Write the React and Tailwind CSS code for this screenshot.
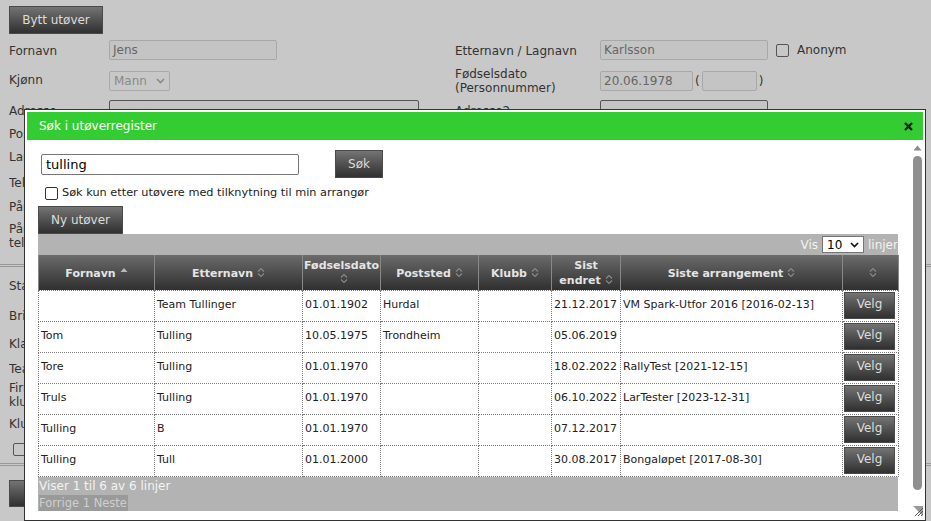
import React from "react";

const rows = [
  ["", "Team Tullinger", "01.01.1902", "Hurdal", "", "21.12.2017", "VM Spark-Utfor 2016 [2016-02-13]"],
  ["Tom", "Tulling", "10.05.1975", "Trondheim", "", "05.06.2019", ""],
  ["Tore", "Tulling", "01.01.1970", "", "", "18.02.2022", "RallyTest [2021-12-15]"],
  ["Truls", "Tulling", "01.01.1970", "", "", "06.10.2022", "LarTester [2023-12-31]"],
  ["Tulling", "B", "01.01.1970", "", "", "07.12.2017", ""],
  ["Tulling", "Tull", "01.01.2000", "", "", "30.08.2017", "Bongaløpet [2017-08-30]"],
];

const colWidths = [116, 148, 78, 98, 73, 69, 222, 56];

const darkBtn =
  "bg-linear-to-b from-[#747474] to-[#303030] border border-[#4a4a4a] text-[#dcdcdc] text-[12px] leading-none flex items-center justify-center";

const SortIcon = ({ active }) =>
  active ? (
    <svg width="8" height="8" viewBox="0 0 8 8" className="relative -top-[4px] ml-[4px] inline-block">
      <path d="M0.5 6 L4 2 L7.5 6Z" fill="#b8b8b8" />
    </svg>
  ) : (
    <svg width="8" height="11" viewBox="0 0 8 11" className="relative -top-[2px] ml-[4px] inline-block">
      <path d="M1 4.5 L4 1.5 L7 4.5 M1 6.5 L4 9.5 L7 6.5" fill="none" stroke="#8a8a8a" strokeWidth="1.1" />
    </svg>
  );

const BgInput = ({ w, value, dark }) => (
  <div
    className={`h-[20px] ${w} rounded-[2px] border ${dark ? "border-[#555]" : "border-[#a8a8a8]"} bg-[#c4c4c4] px-[3px] text-[12px] leading-[18px] text-[#666]`}
  >
    {value}
  </div>
);

const BgCheck = () => <span className="inline-block h-[13px] w-[13px] rounded-[2px] border border-[#555]" />;

// labels that sit behind the dialog: only their first letters show
const Label = ({ h, children }) => (
  <div className={`flex ${h} w-[15px] items-center overflow-hidden whitespace-nowrap leading-[14px]`}>
    <div>{children}</div>
  </div>
);

function Background() {
  return (
    <div className="pl-[9px] pt-[6px]">
      <button className={`${darkBtn} h-[28px] w-[94px] text-[#c8c8c8]`}>Bytt utøver</button>

      <div className="mt-[6px] grid grid-cols-[100px_346px_145px_1fr] gap-y-[6px]">
        <div className="flex h-[20px] items-center pt-[1px]">Fornavn</div>
        <div className="flex items-center">
          <BgInput w="w-[168px]" value="Jens" />
        </div>
        <div className="flex h-[20px] items-center pt-[1px]">Etternavn / Lagnavn</div>
        <div className="flex items-center gap-[8px]">
          <BgInput w="w-[168px]" value="Karlsson" />
          <BgCheck />
          <span>Anonym</span>
        </div>

        <div className="flex h-[28px] items-center">Kjønn</div>
        <div className="flex items-center">
          <div className="flex h-[20px] w-[61px] items-center justify-between rounded-[2px] border border-[#a8a8a8] px-[4px] text-[#8a8a8a]">
            <span>Mann</span>
            <svg width="9" height="6" viewBox="0 0 9 6">
              <path d="M1 1 L4.5 4.5 L8 1" fill="none" stroke="#8a8a8a" strokeWidth="1.6" />
            </svg>
          </div>
        </div>
        <div className="pt-[1px] leading-[14px]">
          Fødselsdato
          <br />
          (Personnummer)
        </div>
        <div className="flex items-center gap-[2px]">
          <BgInput w="w-[93px]" value="20.06.1978" />
          <span>(</span>
          <BgInput w="w-[55px]" value="" />
          <span>)</span>
        </div>
      </div>

      <div className="mt-[5px] grid grid-cols-[100px_346px_145px_1fr]">
        <div className="flex h-[22px] items-center">Adresse</div>
        <div>
          <BgInput w="w-[310px]" value="" dark />
        </div>
        <div className="flex h-[22px] items-center">Adresse2</div>
        <div>
          <BgInput w="w-[168px]" value="" dark />
        </div>
      </div>

      <Label h="h-[24px]">Postnr / Sted</Label>
      <Label h="h-[22px]">Land</Label>
      <Label h="h-[30px]">Telefon</Label>
      <Label h="h-[18px]">Pårørende</Label>
      <Label h="h-[40px]">
        Pårørende
        <br />
        telefon
      </Label>
      <div className="mt-[8px] -ml-[9px] border-t-[3px] border-double border-[#999]" />
      <Label h="h-[38px]">Startnummer</Label>
      <Label h="h-[22px]">Brikke</Label>
      <Label h="h-[34px]">Klasse</Label>
      <Label h="h-[16px]">Team</Label>
      <Label h="h-[36px]">
        Firma /
        <br />
        klubb
      </Label>
      <Label h="h-[22px]">Klubb</Label>
      <div className="flex h-[28px] items-center pl-[4px]">
        <BgCheck />
      </div>
      <div className="-ml-[9px] border-t-[3px] border-double border-[#999]" />
      <button className={`${darkBtn} mt-[14px] h-[27px] w-[94px]`} aria-label="Lagre" />
    </div>
  );
}

function Dialog() {
  return (
    <div className="absolute left-[24px] top-[109px] flex h-[412px] w-[902px] flex-col border border-[#333] bg-white p-[2px]">
      <div className="flex h-[28px] shrink-0 items-center justify-between bg-[#33cc33] pl-[12px] pr-[10px] text-[12px] text-white">
        <span>Søk i utøverregister</span>
        <svg width="9" height="9" viewBox="0 0 9 9">
          <path d="M1 1 L8 8 M8 1 L1 8" stroke="#1a1a1a" strokeWidth="2.4" />
        </svg>
      </div>

      <div className="flex min-h-0 flex-1">
        <div className="w-[886px] text-[#222]">
          <div className="ml-[14px] mt-[10px] flex items-center">
            <div className="h-[21px] w-[258px] rounded-[2px] border border-[#767676] px-[4px] text-[13px] leading-[19px] text-black">
              tulling
            </div>
            <button className={`${darkBtn} ml-[36px] h-[28px] w-[48px]`}>Søk</button>
          </div>
          <div className="ml-[18px] mt-[8px] flex h-[14px] items-center gap-[4px] text-[11.3px]">
            <span className="inline-block h-[13px] w-[13px] rounded-[2px] border border-[#333] bg-white" />
            <span>Søk kun etter utøvere med tilknytning til min arrangør</span>
          </div>
          <button className={`${darkBtn} ml-[11px] mt-[6px] h-[28px] w-[85px]`}>Ny utøver</button>

          <div className="ml-[11px] w-[860px]">
            <div className="flex h-[21px] items-center justify-end gap-[4px] bg-[#b3b3b3] text-[12px] text-[#f2f2f2]">
              <span>Vis</span>
              <div className="flex h-[17px] w-[42px] items-center justify-between border border-[#767676] bg-white px-[4px] text-black">
                <span>10</span>
                <svg width="9" height="6" viewBox="0 0 9 6">
                  <path d="M1 1 L4.5 4.5 L8 1" fill="none" stroke="#111" strokeWidth="1.6" />
                </svg>
              </div>
              <span className="w-[30px] overflow-hidden">linjer</span>
            </div>

            <table className="w-[860px] table-fixed border-collapse text-[11px]">
              <colgroup>
                {colWidths.map((w, i) => (
                  <col key={i} style={{ width: w }} />
                ))}
              </colgroup>
              <thead>
                <tr className="h-[35px] bg-linear-to-b from-[#6c6c6c] to-[#303030] text-center font-bold text-[#e4e4e4]">
                  <th className="border-x border-[#888] pt-[4px] font-bold">
                    Fornavn
                    <SortIcon active />
                  </th>
                  <th className="border-x border-[#888] pt-[4px] font-bold">
                    Etternavn
                    <SortIcon />
                  </th>
                  <th className="border-x border-[#888] pt-[1px] font-bold leading-[15px]">
                    Fødselsdato
                    <br />
                    <SortIcon />
                  </th>
                  <th className="border-x border-[#888] pt-[4px] font-bold">
                    Poststed
                    <SortIcon />
                  </th>
                  <th className="border-x border-[#888] pt-[4px] font-bold">
                    Klubb
                    <SortIcon />
                  </th>
                  <th className="border-x border-[#888] pt-[2px] font-bold leading-[15px]">
                    Sist
                    <br />
                    endret
                    <SortIcon />
                  </th>
                  <th className="border-x border-[#888] pt-[4px] font-bold">
                    Siste arrangement
                    <SortIcon />
                  </th>
                  <th className="border-x border-[#888] pt-[4px] font-bold">
                    <SortIcon />
                  </th>
                </tr>
              </thead>
              <tbody>
                {rows.map((r, i) => (
                  <tr key={i} className="h-[31px]">
                    {r.map((c, j) => (
                      <td key={j} className="whitespace-nowrap border border-dotted border-[#7a7a7a] pl-[2px] align-middle">
                        {c}
                      </td>
                    ))}
                    <td className="border border-dotted border-[#7a7a7a] pl-[1px]">
                      <button className={`${darkBtn} h-[27px] w-[51px] pb-[4px]`}>Velg</button>
                    </td>
                  </tr>
                ))}
              </tbody>
            </table>

            <div className="flex h-[34px] flex-col items-start bg-[#b3b3b3] px-[1px] pt-[2px] text-[12px]">
              <div className="h-[15px] leading-[15px] text-[#f4f4f4]">Viser 1 til 6 av 6 linjer</div>
              <div className="mt-[1px] h-[16px] bg-[#9a9a9a] pr-[1px] text-[11.5px] leading-[16px] text-[#cfcfcf]">
                Forrige 1 Neste
              </div>
            </div>
          </div>
        </div>

        <div className="relative flex w-[12px] flex-col items-center">
          <svg width="9" height="6" viewBox="0 0 9 6" className="mt-[5px]">
            <path d="M0.5 5.5 L4.5 0.5 L8.5 5.5Z" fill="#8a8a8a" />
          </svg>
          <div className="mt-[5px] h-[334px] w-[9px] rounded-full bg-[#8f8f8f]" />
          <svg width="12" height="12" viewBox="0 0 12 12" className="absolute bottom-[1px] right-[-1px]">
            <path d="M1 1 L11 1 L11 11Z" fill="#9a9a9a" />
            <path d="M3 11 L11 3 M6 11 L11 6 M9 11 L11 9" stroke="#555" strokeWidth="1" />
          </svg>
        </div>
      </div>
    </div>
  );
}

export default function App() {
  return (
    <div className="relative h-[521px] w-[931px] overflow-hidden bg-[#c8c8c8] font-['DejaVu_Sans',sans-serif] text-[12px] text-[#333]">
      <Background />
      <Dialog />
    </div>
  );
}
